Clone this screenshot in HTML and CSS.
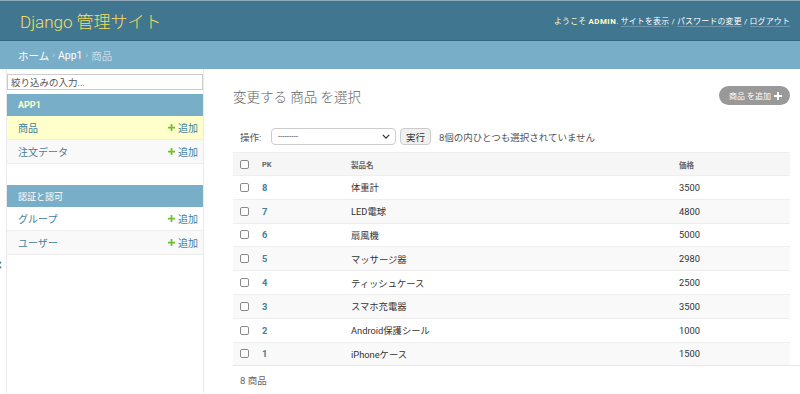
FILE: index.html
```html
<!DOCTYPE html>
<html lang="ja">
<head>
  <meta charset="UTF-8" />
  <meta name="viewport" content="width=device-width, initial-scale=1.0"/>
  <title>変更する 商品 を選択 | Django サイト管理</title>
  <link rel="stylesheet" href="styles.css">
</head>
<body>
  <div class="header">
    <div class="branding">Django 管理サイト</div>
    <div class="user-tools">
      ようこそ <strong>admin</strong>.
      <a href="#">サイトを表示</a> /
      <a href="#">パスワードの変更</a> /
      <a href="#">ログアウト</a>
    </div>
  </div>

  <div class="breadcrumbs">
    <a href="#">ホーム</a><span class="sep">›</span><a href="#">App1</a><span class="sep">›</span>商品
  </div>

  <div class="main">
    <div class="toggle">
      <svg viewBox="0 0 6 8"><path d="M-3 1l-3 3 3 3M1 1l-3 3 3 3" fill="none" stroke="#447e9b" stroke-width="1.6"/></svg>
    </div>

    <nav class="sidebar">
      <input class="nav-filter" type="search" placeholder="絞り込みの入力...">

      <div class="module current-app">
        <div class="caption">App1</div>
        <div class="model current">
          <a href="#">商品</a>
          <a class="addlink" href="#"><svg viewBox="0 0 8 8"><path d="M3 0h2v3h3v2H5v3H3V5H0V3h3z"/></svg>追加</a>
        </div>
        <div class="model">
          <a href="#">注文データ</a>
          <a class="addlink" href="#"><svg viewBox="0 0 8 8"><path d="M3 0h2v3h3v2H5v3H3V5H0V3h3z"/></svg>追加</a>
        </div>
      </div>

      <div class="module">
        <div class="caption">認証と認可</div>
        <div class="model">
          <a href="#">グループ</a>
          <a class="addlink" href="#"><svg viewBox="0 0 8 8"><path d="M3 0h2v3h3v2H5v3H3V5H0V3h3z"/></svg>追加</a>
        </div>
        <div class="model">
          <a href="#">ユーザー</a>
          <a class="addlink" href="#"><svg viewBox="0 0 8 8"><path d="M3 0h2v3h3v2H5v3H3V5H0V3h3z"/></svg>追加</a>
        </div>
      </div>
    </nav>

    <div class="content">
      <div class="title-row">
        <h1>変更する 商品 を選択</h1>
        <a class="object-tools" href="#">商品 を追加<svg viewBox="0 0 8 8"><path d="M3 0h2v3h3v2H5v3H3V5H0V3h3z"/></svg></a>
      </div>

      <div class="actions">
        <label>操作:</label>
        <span class="select-wrap">
          <select>
            <option>---------</option>
            <option>選択された 商品 の削除</option>
          </select>
          <svg class="chevron" viewBox="0 0 10 6"><path d="M1 1l4 4 4-4" fill="none" stroke="#333" stroke-width="1.6"/></svg>
        </span>
        <button class="go">実行</button>
        <span class="counter">8個の内ひとつも選択されていません</span>
      </div>

      <table class="results">
        <colgroup>
          <col style="width:29px">
          <col style="width:89px">
          <col style="width:328px">
          <col style="width:111px">
        </colgroup>
        <thead>
          <tr>
            <th class="check"><input type="checkbox"></th>
            <th>PK</th>
            <th>製品名</th>
            <th>価格</th>
          </tr>
        </thead>
        <tbody>
          <tr><td class="check"><input type="checkbox"></td><td class="pk"><a href="#">8</a></td><td>体重計</td><td>3500</td></tr>
          <tr><td class="check"><input type="checkbox"></td><td class="pk"><a href="#">7</a></td><td>LED電球</td><td>4800</td></tr>
          <tr><td class="check"><input type="checkbox"></td><td class="pk"><a href="#">6</a></td><td>扇風機</td><td>5000</td></tr>
          <tr><td class="check"><input type="checkbox"></td><td class="pk"><a href="#">5</a></td><td>マッサージ器</td><td>2980</td></tr>
          <tr><td class="check"><input type="checkbox"></td><td class="pk"><a href="#">4</a></td><td>ティッシュケース</td><td>2500</td></tr>
          <tr><td class="check"><input type="checkbox"></td><td class="pk"><a href="#">3</a></td><td>スマホ充電器</td><td>3500</td></tr>
          <tr><td class="check"><input type="checkbox"></td><td class="pk"><a href="#">2</a></td><td>Android保護シール</td><td>1000</td></tr>
          <tr><td class="check"><input type="checkbox"></td><td class="pk"><a href="#">1</a></td><td>iPhoneケース</td><td>1500</td></tr>
        </tbody>
      </table>

      <p class="paginator">8 商品</p>
    </div>
  </div>
</body>
</html>
```

FILE: styles.css
```css
body {
  margin: 0;
  font-family: Roboto, "Noto Sans CJK JP", sans-serif;
  font-size: 9.5px;
  color: #333;
  background: #fff;
}

a {
  color: #447e9b;
  text-decoration: none;
}

/* header */

.header {
  display: flex;
  align-items: center;
  justify-content: space-between;
  height: 39px;
  padding: 0 10px 0 20px;
  background: #417690;
  border-top: 1px solid #8fa9b8;
  border-bottom: 1px solid #386880;
}

.branding {
  font-size: 17px;
  font-weight: 300;
  color: #f5dd5d;
}

.user-tools {
  font-size: 7.9px;
  letter-spacing: 0.2px;
  color: #ffc;
}

.user-tools strong {
  text-transform: uppercase;
  letter-spacing: 0.5px;
}

.user-tools a {
  color: #fff;
  border-bottom: 1px solid rgba(255, 255, 255, 0.25);
}

.breadcrumbs {
  display: flex;
  align-items: center;
  height: 28px;
  padding: 0 18px;
  background: #79aec8;
  color: #c4dce8;
  font-size: 10.5px;
}

.breadcrumbs a {
  color: #fff;
}

.breadcrumbs .sep {
  margin: 0 3px;
  font-size: 9px;
}

/* layout */

.main {
  display: flex;
  min-height: 324px;
}

.toggle {
  width: 6px;
  flex: none;
  border-right: 1px solid #eaeaea;
  padding-top: 192px;
}

.toggle svg {
  display: block;
  width: 6px;
  height: 8px;
  overflow: visible;
}

/* sidebar */

.sidebar {
  width: 196px;
  flex: none;
  border-right: 1px solid #eaeaea;
  padding-top: 5px;
}

.nav-filter {
  display: block;
  box-sizing: border-box;
  width: 100%;
  height: 16px;
  margin: 0 0 4px;
  padding: 0 3px;
  border: 1px solid #ccc;
  font-family: inherit;
  font-size: 9.5px;
  color: #333;
  outline: none;
}

.nav-filter::placeholder {
  color: #555;
}

.module {
  margin-bottom: 21px;
}

.caption {
  display: flex;
  align-items: center;
  height: 22px;
  padding-left: 11px;
  background: #79aec8;
  color: #fff;
  font-size: 9px;
  text-transform: uppercase;
}

.current-app .caption {
  color: #ffc;
  font-weight: bold;
}

.model {
  display: flex;
  align-items: center;
  justify-content: space-between;
  height: 23px;
  padding: 0 5px 0 11px;
  border-bottom: 1px solid #eee;
  font-size: 10px;
}

.model:nth-child(odd) {
  background: #f9f9f9;
}

.model.current {
  background: #ffc;
}

.addlink {
  display: flex;
  align-items: center;
  gap: 3px;
}

.addlink svg {
  width: 7px;
  height: 7px;
  fill: #70bf2b;
}

/* content */

.content {
  flex: 1;
  padding-left: 29px;
}

.title-row {
  display: flex;
  align-items: center;
  justify-content: space-between;
  height: 19px;
  margin: 17px 10px 0 0;
}

h1 {
  margin: 0;
  font-size: 13.5px;
  font-weight: 300;
  color: #666;
}

.object-tools {
  display: flex;
  align-items: center;
  gap: 3px;
  height: 19px;
  padding: 0 8px 0 10px;
  border-radius: 10px;
  background: #999;
  color: #fff;
  font-size: 8px;
}

.object-tools svg {
  width: 8px;
  height: 8px;
  fill: #fff;
}

.actions {
  display: flex;
  align-items: center;
  height: 17px;
  margin-top: 23px;
  padding-left: 7px;
  color: #555;
}

.actions label {
  width: 31px;
}

.select-wrap {
  position: relative;
  display: flex;
}

.actions select {
  appearance: none;
  width: 125px;
  height: 17px;
  padding: 0 6px;
  border: 1px solid #ccc;
  border-radius: 4px;
  background: #fff;
  font-family: inherit;
  font-size: 8px;
  color: #333;
}

.chevron {
  position: absolute;
  right: 6px;
  top: 6px;
  width: 8px;
  height: 5px;
  pointer-events: none;
}

.go {
  height: 17px;
  margin: 0 8px 0 4px;
  padding: 0 5px;
  border: 1px solid #ccc;
  border-radius: 4px;
  background: #f0f0f0;
  font-family: inherit;
  font-size: 9.5px;
  color: #333;
}

.counter {
  font-size: 9.5px;
}

.results {
  width: 557px;
  margin-top: 7px;
  border-collapse: collapse;
  table-layout: fixed;
}

.results th {
  height: 22px;
  padding: 0;
  background: #f6f6f6;
  border-top: 1px solid #eee;
  border-bottom: 1px solid #eee;
  text-align: left;
  font-size: 7.5px;
  font-weight: bold;
  color: #666;
}

.results td {
  height: 22.8px;
  padding: 0;
  border-bottom: 1px solid #eee;
  font-size: 9.3px;
}

.results tbody tr:nth-child(even) td {
  background: #f9f9f9;
}

.results tbody tr:last-child td {
  border-bottom: none;
}

.results .check {
  padding-left: 7px;
}

.results input[type="checkbox"] {
  appearance: none;
  display: block;
  width: 9px;
  height: 9px;
  margin: 0;
  border: 1px solid #8a8a8a;
  border-radius: 2px;
  background: #fff;
}

.results .pk a {
  font-weight: bold;
}

.paginator {
  margin: 0;
  padding: 9px 0 0 7px;
  border-top: 1px solid #e6e6e6;
  line-height: 12px;
  color: #666;
}
```
